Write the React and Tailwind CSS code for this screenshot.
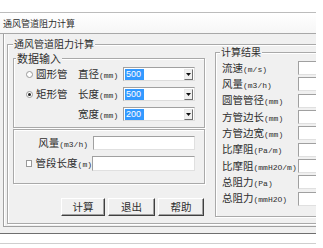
import React from 'react';

const cjk = "font-['Noto_Sans_CJK_SC','Noto_Sans_CJK_JP',sans-serif]";

const Unit = ({ children }) => (
  <span className="font-['Liberation_Mono',monospace] text-[8px]">{children}</span>
);

const GroupBox = ({ title, legendLeft, legendSize, className, children }) => (
  <div className={`relative border border-[#a9a9a9] shadow-[inset_1px_1px_0_#fff,1px_1px_0_#fff] ${className}`}>
    <span className={`absolute top-[-7px] bg-[#f0f0f0] px-[1px] leading-[12px] ${legendLeft} ${legendSize}`}>{title}</span>
    {children}
  </div>
);

const Radio = ({ checked }) => (
  <span className="flex h-[7px] w-[7px] items-center justify-center rounded-full border border-[#999] bg-white">
    {checked && <span className="h-[3px] w-[3px] rounded-full bg-[#222]" />}
  </span>
);

const Combo = ({ value }) => (
  <div className="flex h-[14px] w-[72px] items-center border border-[#a0a0a0] border-r-[#dcdcdc] border-b-[#dcdcdc] bg-white">
    <span className="ml-[1px] flex h-[11px] w-[19px] items-center bg-[#3399ff] pl-[1px] font-['Liberation_Sans',sans-serif] text-[9px] text-white">
      {value}
    </span>
    <span className="flex-1" />
    <span className="mr-[1px] flex h-[11px] w-[9px] items-center justify-center border border-[#e8e8e8] border-r-[#707070] border-b-[#707070] bg-[#f0f0f0]">
      <svg width="5" height="3" viewBox="0 0 5 3">
        <path d="M0 0h5L2.5 3z" fill="#111" />
      </svg>
    </span>
  </div>
);

const Field = ({ w }) => (
  <div className={`h-[14px] border border-[#a0a0a0] border-r-[#e0e0e0] border-b-[#e0e0e0] bg-white ${w}`} />
);

const Button = ({ label, w }) => (
  <div className={`flex h-[18px] items-center justify-center border border-white border-r-[#404040] border-b-[#404040] bg-[#f0f0f0] text-[10.5px] shadow-[inset_-1px_-1px_0_#a0a0a0] ${w}`}>
    {label}
  </div>
);

const results = [
  ['流速', '(m/s)'],
  ['风量', '(m3/h)'],
  ['圆管管径', '(mm)'],
  ['方管边长', '(mm)'],
  ['方管边宽', '(mm)'],
  ['比摩阻', '(Pa/m)'],
  ['比摩阻', '(mmH2O/m)'],
  ['总阻力', '(Pa)'],
  ['总阻力', '(mmH2O)'],
];

const App = () => {
  return (
    <div className={`flex h-[248px] w-[323px] overflow-hidden bg-white text-[#2e2e2e] ${cjk}`}>
      <div className="flex w-[316px] shrink-0 flex-col overflow-hidden">
        <div className="h-[12px] bg-white" />
        <div className="h-[1px] bg-[#bcbcbc]" />
        <div className="flex h-[20px] items-center bg-gradient-to-b from-white to-[#f6f6f6] pl-[3px] text-[9px] leading-none">
          通风管道阻力计算
        </div>
        <div className="h-[1px] bg-[#a8a8a8]" />

        <div className="h-[199px] bg-[#f0f0f0] pl-[3px]">
          <div className="h-[193px] border-l border-b border-[#a0a0a0] pl-[3px] pt-[10px] shadow-[inset_1px_0_0_#fff]">
            <GroupBox title="通风管道阻力计算" legendLeft="left-[5px]" legendSize="text-[10px]" className="flex h-[180px] w-[330px]">
              {/* left column */}
              <div className="ml-[5px] flex w-[192px] shrink-0 flex-col">
                <GroupBox title="数据输入" legendLeft="left-[2px]" legendSize="text-[11px]" className="mt-[13px] h-[70px] pl-[12px] pt-[5px]">
                  <div className="flex h-[20px] items-center text-[10.5px] leading-none">
                    <div className="flex w-[52px] items-center">
                      <Radio />
                      <span className="ml-[3px]">圆形管</span>
                    </div>
                    <div className="w-[45px] whitespace-nowrap">直径<Unit>(mm)</Unit></div>
                    <Combo value="500" />
                  </div>
                  <div className="flex h-[20px] items-center text-[10.5px] leading-none">
                    <div className="flex w-[52px] items-center">
                      <Radio checked />
                      <span className="ml-[3px]">矩形管</span>
                    </div>
                    <div className="w-[45px] whitespace-nowrap">长度<Unit>(mm)</Unit></div>
                    <Combo value="500" />
                  </div>
                  <div className="flex h-[20px] items-center text-[10.5px] leading-none">
                    <div className="w-[52px]" />
                    <div className="w-[45px] whitespace-nowrap">宽度<Unit>(mm)</Unit></div>
                    <Combo value="200" />
                  </div>
                </GroupBox>

                <div className="mt-[1px] h-[55px] border border-[#a9a9a9] pl-[12px] pt-[3px] shadow-[inset_1px_1px_0_#fff,1px_1px_0_#fff]">
                  <div className="flex h-[20px] items-center text-[10.5px] leading-none">
                    <div className="w-[67px] whitespace-nowrap pr-[5px] text-right">风量<Unit>(m3/h)</Unit></div>
                    <Field w="w-[102px]" />
                  </div>
                  <div className="flex h-[20px] items-center text-[10.5px] leading-none">
                    <div className="flex w-[66px] items-center whitespace-nowrap">
                      <span className="h-[7px] w-[7px] border border-[#999] bg-white" />
                      <span className="ml-[4px]">管段长度<Unit>(m)</Unit></span>
                    </div>
                    <Field w="w-[103px] h-[15px]" />
                  </div>
                </div>

                <div className="mt-[14px] flex justify-end gap-[3px] pr-[1px]">
                  <Button label="计算" w="w-[44px]" />
                  <Button label="退出" w="w-[47px]" />
                  <Button label="帮助" w="w-[46px]" />
                </div>
              </div>

              {/* right column */}
              <GroupBox title="计算结果" legendLeft="left-[4px]" legendSize="text-[10px]" className="ml-[10px] mt-[7px] h-[165px] w-[120px] pt-[7px]">
                {results.map(([name, unit], i) => (
                  <div key={i} className="flex h-[16.33px] items-center text-[10.5px] leading-none">
                    <div className="w-[82px] whitespace-nowrap pl-[6px]">
                      {name}
                      <Unit>{unit}</Unit>
                    </div>
                    <Field w="w-[30px] h-[13px]" />
                  </div>
                ))}
              </GroupBox>
            </GroupBox>
          </div>
        </div>

        <div className="h-[1px] bg-[#6e6e6e]" />
        <div className="h-[9px] bg-white" />
        <div className="h-[1px] bg-[#cfcfcf]" />
        <div className="flex-1 bg-white" />
      </div>
    </div>
  );
};

export default App;
